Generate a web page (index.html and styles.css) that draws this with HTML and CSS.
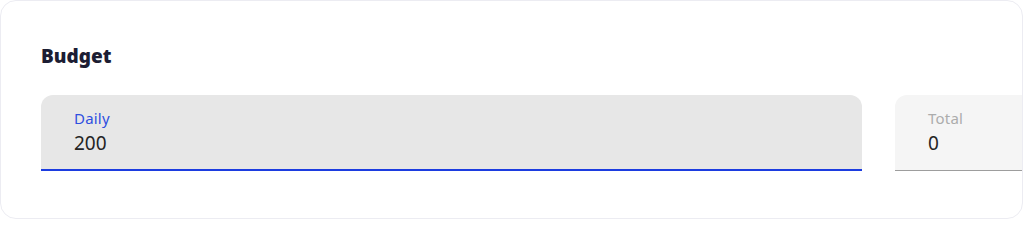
FILE: index.html
```html
<!DOCTYPE html>
<html>
<head>
<meta charset="utf-8">
<link rel="stylesheet" href="styles.css">
</head>
<body>
<div class="card">
  <h2 class="title">Budget</h2>
  <div class="fields">
    <div class="field field-active">
      <div class="label">Daily</div>
      <div class="value">200</div>
    </div>
    <div class="field field-idle">
      <div class="label">Total</div>
      <div class="value">0</div>
    </div>
  </div>
</div>
</body>
</html>
```
FILE: styles.css
```css
html, body {
  margin: 0;
  padding: 0;
  background: #ffffff;
}
body {
  font-family: "Noto Sans", "Open Sans", sans-serif;
}
.card {
  box-sizing: border-box;
  width: 1023px;
  height: 219px;
  border: 1px solid #ececf2;
  border-radius: 16px;
  overflow: hidden;
  padding: 40px 0 0 40px;
  background: #fff;
}
.title {
  margin: 0;
  font-size: 19px;
  line-height: 28px;
  font-weight: 900;
  color: #1c1d33;
  position: relative;
  top: 1px;
}
.fields {
  display: flex;
  gap: 33px;
  margin-top: 26px;
}
.field {
  flex: 0 0 821px;
  box-sizing: border-box;
  height: 76px;
  padding: 14px 0 0 33px;
  border-radius: 12px 12px 0 0;
}
.field-active {
  background: #e7e7e7;
  border-bottom: 2px solid #1c3ce0;
}
.field-idle {
  background: #f5f5f5;
  border-bottom: 1px solid #9d9d9d;
}
.label {
  font-size: 15px;
  line-height: 18px;
  letter-spacing: 0.2px;
}
.field-active .label { color: #2f4fe0; }
.field-idle .label { color: #acacac; }
.value {
  font-size: 19px;
  line-height: 26px;
  color: #242424;
  margin-top: 3px;
}
```
